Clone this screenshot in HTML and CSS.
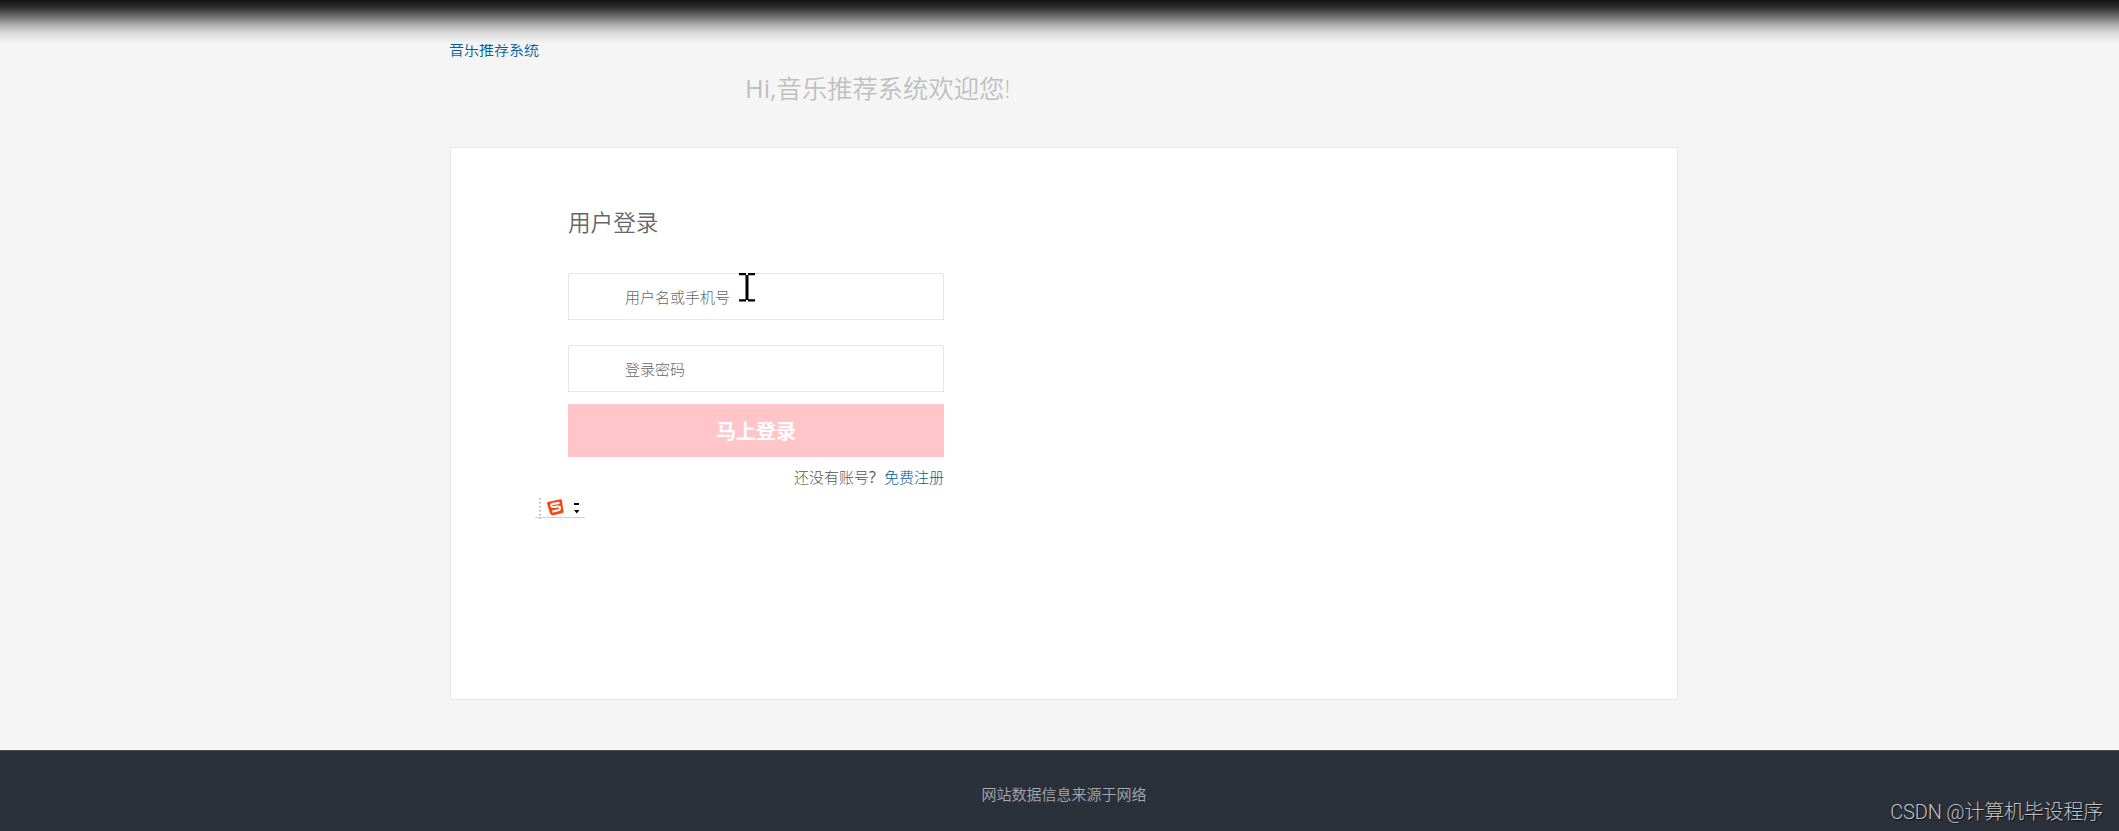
FILE: index.html
```html
<!DOCTYPE html>
<html lang="zh-CN">
<head>
  <meta charset="utf-8">
  <title>用户登录</title>
  <link rel="stylesheet" href="styles.css">
</head>
<body>
  <div class="top-shade"></div>
  <div class="header">
    <a class="logo" href="#">音乐推荐系统</a>
    <h1 class="welcome"><span class="hi">Hi,</span>音乐推荐系统欢迎您!</h1>
  </div>

  <div class="login-box">
    <form class="login-form">
      <h2 class="title">用户登录</h2>
      <input class="field" type="text" placeholder="用户名或手机号">
      <input class="field" type="password" placeholder="登录密码">
      <button class="submit" type="button">马上登录</button>
      <div class="register"><span class="ask">还没有账号<b class="mark">?</b></span><a class="reg-link" href="#">免费注册</a></div>
    </form>
  </div>

  <div class="footer">
    <p class="source">网站数据信息来源于网络</p>
  </div>

  <!-- text cursor -->
  <svg class="cursor" width="16" height="29" viewBox="0 0 16 29">
    <path d="M0 1.1H7M9 1.1H16M0 27.4H7M9 27.4H16" stroke="#000" stroke-width="2.2"/>
    <path d="M8 2V27" stroke="#000" stroke-width="3"/>
  </svg>

  <!-- input method bar -->
  <svg class="ime" width="50" height="23" viewBox="0 0 50 23">
    <path d="M5 1V22" stroke="#bbb" stroke-width="2" stroke-dasharray="1.6 2.4"/>
    <path d="M0 20.5H50" stroke="#d2d2d2"/>
    <path d="M13.600 4.700L25.600 2.300Q26.700 2.100 26.900 3.200L28.500 14.300Q28.700 15.500 27.600 15.900L18 18.300Q15.800 18.500 15 16.300L12 6.500Q11.800 5.200 13.600 4.700Z" fill="#f9460d"/>
    <path d="M24.500 5.900L18 6.900Q16 7.300 16.400 9Q16.800 10.200 18.600 10L22.800 9.500Q24.900 9.400 25 11Q25.100 12.800 23.200 13.300L17.300 14.600" fill="none" stroke="#fff" stroke-width="2.100"/>
    <path d="M39 7H44" stroke="#000" stroke-width="2"/>
    <path d="M39 13H44.500L41.700 16.500Z" fill="#000"/>
  </svg>

  <div class="watermark">CSDN @计算机毕设程序</div>
</body>
</html>
```

FILE: styles.css
```css
* {
  box-sizing: border-box;
}

body {
  margin: 0;
  height: 831px;
  display: flex;
  flex-direction: column;
  overflow: hidden;
  background: #f5f5f5;
  color: #555;
  font-family: "Open Sans", "Noto Sans CJK SC", sans-serif;
  font-size: 15px;
  font-weight: 300;
}

h1, h2, p {
  margin: 0;
  font-weight: 350;
}

a {
  color: #00609f;
  text-decoration: none;
}

.top-shade {
  position: absolute;
  top: 0;
  left: 0;
  width: 100%;
  height: 44px;
  background: linear-gradient(#131313 0%, #303030 18%, #6b6b6b 36%, #b0b0b0 57%, #dedede 77%, #f5f5f5 100%);
}

.header {
  width: 1228px;
  height: 147px;
  margin-left: 450px;
  padding-top: 39px;
}

.logo {
  display: block;
  line-height: 20px;
  margin-left: -1px;
  font-weight: 350;
}

.welcome {
  padding: 13px 0 0 295px;
  font-size: 25.3px;
  line-height: 32px;
  color: #bfbfbf;
}

.hi {
  font-weight: 400;
}

.login-box {
  width: 1228px;
  height: 553px;
  margin-left: 450px;
  padding: 57px 0 0 117px;
  background: #fff;
  border: 1px solid #e8e8e8;
}

.login-form {
  width: 376px;
  display: flex;
  flex-direction: column;
}

.title {
  height: 68px;
  font-size: 22.6px;
  line-height: 35px;
  color: #666;
}

.field {
  height: 47px;
  margin-bottom: 25px;
  padding: 0 20px 0 56px;
  border: 1px solid #e6e6e6;
  outline: none;
  background: #fff;
  font: inherit;
}

.field::placeholder {
  color: #666;
}

.submit {
  height: 53px;
  margin-top: -13px;
  padding: 0;
  border: none;
  background: #ffc5c9;
  color: #fff;
  font-family: inherit;
  font-size: 20px;
  font-weight: 700;
}

.register {
  display: flex;
  justify-content: flex-end;
  gap: 8px;
  padding-top: 9px;
  line-height: 22px;
}

.mark {
  font-weight: 400;
  font-size: 16px;
}

.footer {
  height: 81px;
  margin-top: 50px;
  padding: 33px 0 0 9px;
  background: #2b313b;
  border-top: 1px solid #4a5050;
  color: #a5a9b0;
  text-align: center;
}

.source {
  line-height: 20px;
}

.cursor {
  position: absolute;
  left: 739px;
  top: 273px;
}

.ime {
  position: absolute;
  left: 535px;
  top: 497px;
}

.watermark {
  position: absolute;
  right: 16px;
  top: 797px;
  font-family: Roboto, "Noto Sans CJK SC", sans-serif;
  font-size: 20px;
  letter-spacing: -0.2px;
  line-height: 30px;
  color: #bfc1c4;
  text-shadow: 1px 1px 1px #111;
}
```
